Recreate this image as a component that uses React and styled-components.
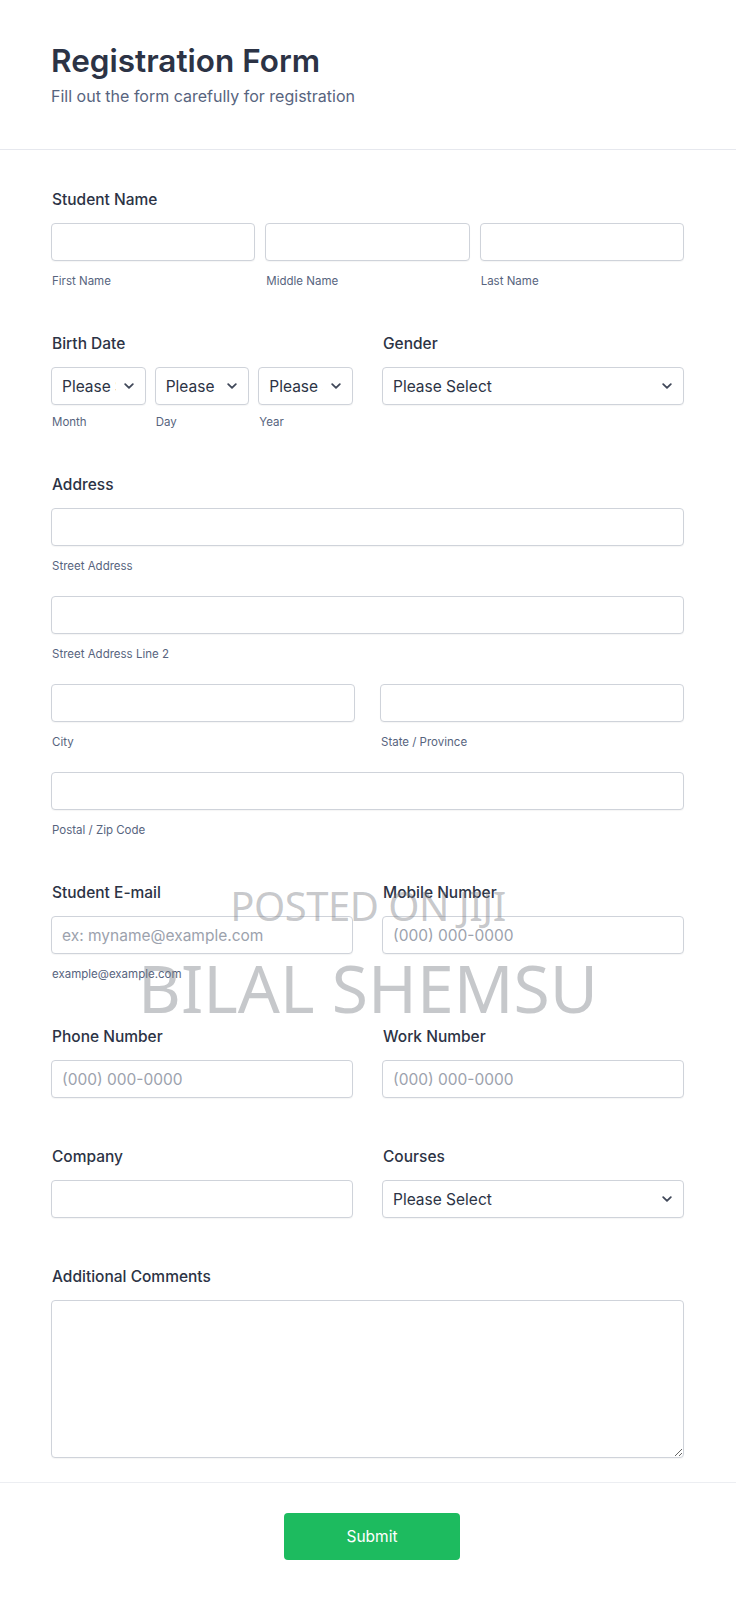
import React from 'react';
import styled, { createGlobalStyle } from 'styled-components';

const GlobalStyle = createGlobalStyle`
  body {
    margin: 0;
    background: #ffffff;
    font-family: Inter, "Noto Sans", sans-serif;
    color: #2c3345;
  }
  * {
    box-sizing: border-box;
  }
`;

const Page = styled.div`
  position: relative;
  width: 736px;
  background: #ffffff;
`;

const Header = styled.header`
  padding: 41px 51px 43px;
  border-bottom: 1px solid #e6e8ee;
`;

const Title = styled.h1`
  margin: 0;
  font-size: 31.5px;
  line-height: 40px;
  font-weight: 600;
  color: #2c3345;
`;

const Subtitle = styled.p`
  margin: 5px 0 0;
  font-size: 16px;
  line-height: 20px;
  color: #57647e;
`;

const FormBody = styled.div`
  display: flex;
  flex-direction: column;
  gap: 45px;
  padding: 40px 52px 24px 51px;
`;

const Section = styled.div`
  display: flex;
  flex-direction: column;
  padding-bottom: ${({ $pad }) => $pad || 0}px;
`;

const Label = styled.label`
  display: block;
  font-size: 15.5px;
  line-height: 20px;
  font-weight: 500;
  color: #2c3345;
  margin: 0 0 13px 1px;
`;

const Grid = styled.div`
  display: grid;
  grid-template-columns: repeat(${({ $cols }) => $cols || 1}, 1fr);
  column-gap: ${({ $gap }) => $gap || 0}px;
  row-gap: ${({ $rowGap }) => $rowGap || 0}px;
  align-items: start;
`;

const Cell = styled.div`
  display: flex;
  flex-direction: column;
  min-width: 0;
  grid-column: ${({ $wide }) => ($wide ? '1 / -1' : 'auto')};
`;

const TextInput = styled.input`
  width: 100%;
  height: 38px;
  padding: 0 10px;
  border: 1px solid #cfd3da;
  border-radius: 4px;
  box-shadow: 0 1px 1px rgba(0, 0, 0, 0.04);
  background: #ffffff;
  font-family: Inter, sans-serif;
  font-size: 15.5px;
  color: #2c3345;
  outline: none;

  &::placeholder {
    color: #9ca2ad;
  }
`;

const SubLabel = styled.span`
  display: block;
  margin: ${({ $tight }) => ($tight ? 9 : 12)}px 0 0 1px;
  font-size: 11.5px;
  line-height: 16px;
  color: #57647e;
`;

const SelectBox = styled.div`
  display: flex;
  align-items: center;
  height: 38px;
  padding: 0 11px 0 10px;
  border: 1px solid #cfd3da;
  border-radius: 4px;
  box-shadow: 0 1px 1px rgba(0, 0, 0, 0.04);
  background: #ffffff;
  font-size: 15.5px;
  color: #2c3345;
  gap: 8px;
`;

const SelectText = styled.span`
  flex: 1;
  min-width: 0;
  overflow: hidden;
  white-space: nowrap;
`;

const Chevron = styled.svg`
  flex: none;
  width: 10px;
  height: 6px;
`;

const TextArea = styled.textarea`
  width: 100%;
  height: 158px;
  padding: 10px;
  border: 1px solid #cfd3da;
  border-radius: 4px;
  box-shadow: 0 1px 1px rgba(0, 0, 0, 0.04);
  font-family: Inter, sans-serif;
  font-size: 15.5px;
  color: #2c3345;
  outline: none;
  display: block;
`;

const Footer = styled.div`
  display: flex;
  justify-content: center;
  padding: 30px 0 39px;
  border-top: 1px solid #eceef2;
`;

const SubmitButton = styled.button`
  width: 176px;
  height: 47px;
  border: none;
  border-radius: 4px;
  background: #1dbb5f;
  color: #ffffff;
  font-family: Inter, sans-serif;
  font-size: 15.5px;
  font-weight: 400;
  margin-left: 8px;
  cursor: pointer;
`;

const Watermark = styled.div`
  position: absolute;
  top: 886px;
  left: 0;
  right: 0;
  display: flex;
  flex-direction: column;
  align-items: center;
  pointer-events: none;
  font-family: "Noto Sans", "Open Sans", sans-serif;
  color: rgba(120, 124, 130, 0.42);
`;

const MarkSmall = styled.span`
  font-size: 40px;
  line-height: 40px;
  letter-spacing: -0.5px;
`;

const MarkLarge = styled.span`
  margin-top: 28px;
  font-size: 66px;
  line-height: 67px;
`;

const Select = ({ text = 'Please Select' }) => (
  <SelectBox>
    <SelectText>{text}</SelectText>
    <Chevron viewBox="0 0 10 6" fill="none">
      <path d="M1.2 1.2L5 4.8L8.8 1.2" stroke="#404859" strokeWidth="1.8" strokeLinecap="round" strokeLinejoin="round" />
    </Chevron>
  </SelectBox>
);

const Field = ({ sub, placeholder, wide }) => (
  <Cell $wide={wide}>
    <TextInput placeholder={placeholder} />
    {sub && <SubLabel>{sub}</SubLabel>}
  </Cell>
);

const App = () => {
  return (
    <Page>
      <GlobalStyle />
      <Header>
        <Title>Registration Form</Title>
        <Subtitle>Fill out the form carefully for registration</Subtitle>
      </Header>

      <FormBody>
        <Section>
          <Label>Student Name</Label>
          <Grid $cols={3} $gap={10}>
            <Field sub="First Name" />
            <Field sub="Middle Name" />
            <Field sub="Last Name" />
          </Grid>
        </Section>

        <Grid $cols={2} $gap={29}>
          <Section>
            <Label>Birth Date</Label>
            <Grid $cols={3} $gap={9}>
              {['Month', 'Day', 'Year'].map((part) => (
                <Cell key={part}>
                  <Select />
                  <SubLabel $tight>{part}</SubLabel>
                </Cell>
              ))}
            </Grid>
          </Section>
          <Section>
            <Label>Gender</Label>
            <Select />
          </Section>
        </Grid>

        <Section>
          <Label>Address</Label>
          <Grid $cols={2} $gap={25} $rowGap={22}>
            <Field wide sub="Street Address" />
            <Field wide sub="Street Address Line 2" />
            <Field sub="City" />
            <Field sub="State / Province" />
            <Field wide sub="Postal / Zip Code" />
          </Grid>
        </Section>

        <Grid $cols={2} $gap={29}>
          <Section>
            <Label>Student E-mail</Label>
            <Field placeholder="ex: myname@example.com" sub="example@example.com" />
          </Section>
          <Section>
            <Label>Mobile Number</Label>
            <Field placeholder="(000) 000-0000" />
          </Section>
        </Grid>

        <Grid $cols={2} $gap={29}>
          <Section $pad={4}>
            <Label>Phone Number</Label>
            <Field placeholder="(000) 000-0000" />
          </Section>
          <Section $pad={4}>
            <Label>Work Number</Label>
            <Field placeholder="(000) 000-0000" />
          </Section>
        </Grid>

        <Grid $cols={2} $gap={29}>
          <Section $pad={4}>
            <Label>Company</Label>
            <Field />
          </Section>
          <Section $pad={4}>
            <Label>Courses</Label>
            <Select />
          </Section>
        </Grid>

        <Section>
          <Label>Additional Comments</Label>
          <TextArea />
        </Section>
      </FormBody>

      <Footer>
        <SubmitButton type="button">Submit</SubmitButton>
      </Footer>

      <Watermark>
        <MarkSmall>POSTED ON JIJI</MarkSmall>
        <MarkLarge>BILAL SHEMSU</MarkLarge>
      </Watermark>
    </Page>
  );
};

export default App;
